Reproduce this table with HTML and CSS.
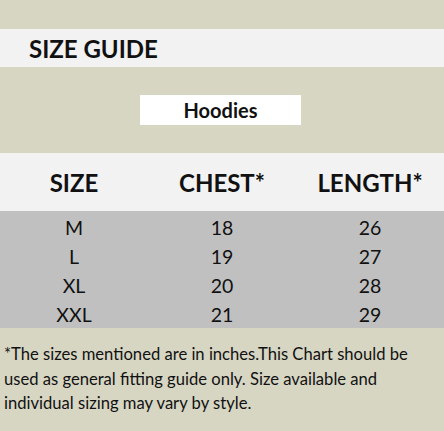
FILE: index.html
```html
<!DOCTYPE html>
<html>
<head>
<meta charset="utf-8">
<link rel="stylesheet" href="styles.css">
</head>
<body>
<div class="page">
  <div class="top-space"></div>
  <div class="title-band"><h1 class="title">SIZE GUIDE</h1></div>
  <div class="product-row"><div class="product">Hoodies</div></div>
  <div class="table">
    <div class="thead">
      <div class="cell">SIZE</div>
      <div class="cell">CHEST*</div>
      <div class="cell">LENGTH*</div>
    </div>
    <div class="tbody">
      <div class="row"><div class="cell">M</div><div class="cell">18</div><div class="cell">26</div></div>
      <div class="row"><div class="cell">L</div><div class="cell">19</div><div class="cell">27</div></div>
      <div class="row"><div class="cell">XL</div><div class="cell">20</div><div class="cell">28</div></div>
      <div class="row"><div class="cell">XXL</div><div class="cell">21</div><div class="cell">29</div></div>
    </div>
  </div>
  <p class="note">*The sizes mentioned are in inches.This Chart should be used as general fitting guide only. Size available and individual sizing may vary by style.</p>
</div>
</body>
</html>
```
FILE: styles.css
```css
html, body { margin: 0; padding: 0; }
body {
  background: #d7d6c3;
  font-family: "Lato", "Open Sans", sans-serif;
  color: #111;
}
.page {
  width: 444px;
  height: 431px;
  background: #d7d6c3;
  overflow: hidden;
}
.top-space { height: 29px; }
.title-band {
  height: 38px;
  background: #f2f2f2;
  display: flex;
  align-items: center;
  padding-left: 29px;
}
.title {
  margin: 0;
  font-size: 24px;
  font-weight: 700;
  letter-spacing: 0;
}
.product-row {
  height: 86px;
  display: flex;
  align-items: center;
  padding-left: 140px;
}
.product {
  width: 161px;
  height: 30px;
  background: #ffffff;
  display: flex;
  align-items: center;
  justify-content: center;
  font-size: 20px;
  font-weight: 700;
}
.thead, .row {
  display: grid;
  grid-template-columns: 148px 148px 148px;
}
.thead {
  height: 58px;
  background: #f2f2f2;
  align-items: center;
}
.thead .cell {
  text-align: center;
  font-size: 24px;
  font-weight: 700;
}
.tbody {
  background: #c0c0c0;
  height: 117px;
  display: grid;
  grid-template-rows: repeat(4, 1fr);
}
.row { align-items: center; }
.row .cell {
  text-align: center;
  font-size: 19.5px;
  padding-top: 3px;
}
.note {
  margin: 0;
  padding: 14px 26px 0 4px;
  font-size: 16.6px;
  line-height: 24.5px;
}
```
